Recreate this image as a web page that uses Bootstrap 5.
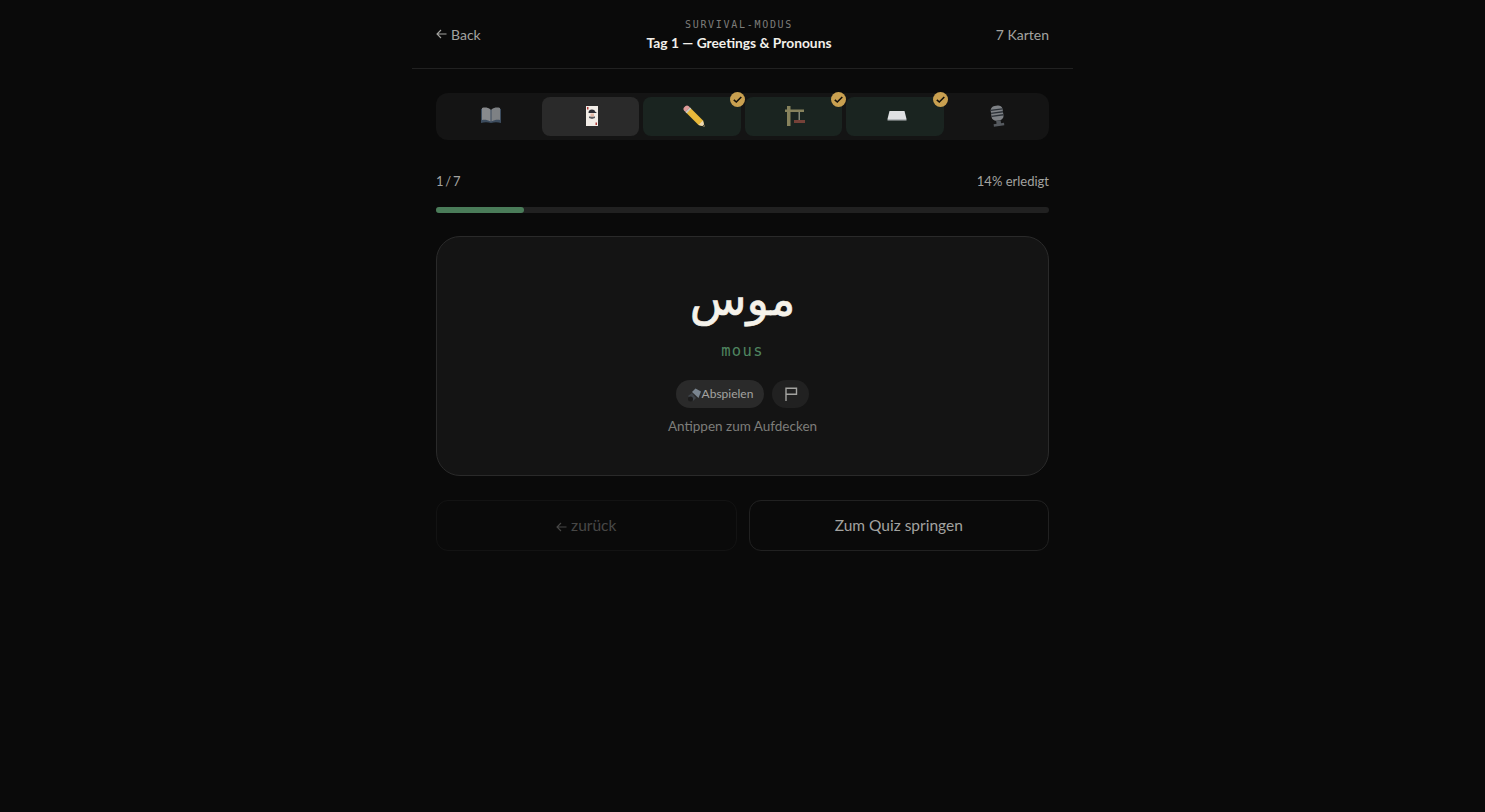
<!DOCTYPE html>
<html lang="de">
<head>
  <meta charset="UTF-8" />
  <meta name="viewport" content="width=device-width, initial-scale=1" />
  <title>Tag 1 — Greetings &amp; Pronouns</title>
  <link href="https://cdn.jsdelivr.net/npm/bootstrap@5.3.3/dist/css/bootstrap.min.css" rel="stylesheet" />
  <style>
    body { background: #0a0a0a; font-family: Lato, "Noto Sans", sans-serif; color: #a3a3a0; min-height: 812px; }
    .shell { width: 661px; margin: 0 auto; }
    .topbar { height: 69px; padding: 0 24px; border-bottom: 1px solid #212121; }
    .topbar-side { width: 110px; font-size: 14px; color: #a3a3a0; }
    .mode-label { font-family: "DejaVu Sans Mono", monospace; font-size: 10px; letter-spacing: 1.7px; color: #7d7d7a; line-height: 12px; margin-bottom: 3px; }
    .day-title { font-size: 13.8px; font-weight: 700; color: #f2f0ea; line-height: 17px; }
    .title-block { margin-left: -7px; padding-top: 2px; }
    .tabbar { height: 47px; margin-top: 24px; padding: 4px; gap: 4px; background: #141414; border-radius: 12px; }
    .tab-item { flex: 1 1 0; border-radius: 8px; position: relative; }
    .tab-item svg.emoji { width: 22px; height: 22px; margin: 0 0 1px 4px; }
    .tab-item.current { background: #2a2a2a; }
    .tab-item.done { background: #1a2420; }
    .tab-check { position: absolute; top: -5px; right: -4px; width: 15px; height: 15px; border-radius: 50%; background: #c9a050; }
    .tab-check svg { display: block; }
    .dim { opacity: .55; }
    .progress-text { margin-top: 32px; font-size: 13px; line-height: 18px; color: #a3a3a0; }
    .step-count { word-spacing: -1.5px; }
    .track { height: 6px; margin-top: 17px; background: #212121; border-radius: 3px; }
    .track-fill { height: 100%; background: #4a7c59; border-radius: 3px; }
    .flashcard { height: 240px; margin-top: 23px; background: #141414; border: 1px solid #2a2a2a; border-radius: 24px; padding-top: 32px; }
    .arabic { font-family: "DejaVu Sans", serif; font-size: 46.5px; line-height: 60px; color: #f5f2ea; font-weight: 400; -webkit-text-stroke: .7px #f5f2ea; }
    .translit { font-family: "DejaVu Sans Mono", monospace; font-size: 15.5px; line-height: 20px; letter-spacing: 1.3px; color: #4f8560; margin-top: 12px; }
    .play-row { margin-top: 19px; gap: 8px; }
    .pill-btn { height: 28px; padding: 0 11px; gap: 0; background: #2a2a2a; border: 0; border-radius: 14px; font-size: 12px; color: #a3a3a0; }
    .flag-btn { width: 37px; height: 28px; padding: 0; background: #212121; border: 0; border-radius: 14px; }
    .hint { margin-top: 10px; font-size: 13.5px; line-height: 17px; color: #7d7d7a; }
    .action-row { margin-top: 24px; gap: 12px; }
    .action-btn { flex: 1 1 0; height: 51px; background: transparent; border: 1px solid #212121; border-radius: 12px; font-size: 15.5px; color: #a3a3a0; }
    .action-btn:disabled { color: #a3a3a0; border-color: #212121; opacity: .4; }
  </style>
</head>
<body>
  <div class="shell">
    <header class="topbar d-flex align-items-center justify-content-between">
      <a class="topbar-side text-decoration-none d-flex align-items-center gap-1" href="#">
        <svg width="11" height="10" viewBox="0 0 11 10" fill="none" stroke="#a3a3a0" stroke-width="1.1"><path d="M10.5 5H1M5 1 1 5l4 4"/></svg>Back
      </a>
      <div class="title-block text-center">
        <div class="mode-label">SURVIVAL-MODUS</div>
        <div class="day-title">Tag 1 — Greetings &amp; Pronouns</div>
      </div>
      <div class="topbar-side text-end">7 Karten</div>
    </header>

    <main class="px-4">
      <nav class="tabbar d-flex">
        <div class="tab-item d-flex align-items-center justify-content-center">
          <svg class="emoji dim" viewBox="0 0 22 22"><path d="M1 4c3-1 7-1 10 1 3-2 7-2 10-1v14c-3-1-7-1-10 0-3-1-7-1-10 0z" fill="#5d7a9c"/><path d="M2 3c3-1 6-.5 8.500 1.500v12c-2.500-1.500-5.500-2-8.500-1.500z" fill="#e8ecf0"/><path d="M20 3c-3-1-6-.5-8.500 1.500v12c2.500-1.500 5.500-2 8.500-1.500z" fill="#d5dae0"/></svg>
        </div>
        <div class="tab-item current d-flex align-items-center justify-content-center">
          <svg class="emoji" viewBox="0 0 22 22"><rect x="5" y="1" width="12" height="20" fill="#f1ece6"/><path d="M7.500 8c0-2 1-3.500 3.500-3.500 2 0 3 1 3 2l1.500 1v.5z" fill="#2c2c34"/><path d="M8 11.500h6v1.500l-3 1-3-1z" fill="#5a5a60"/><path d="M9.500 8.500h3.500v3H9.500z" fill="#e3b8a6"/><path d="M6 2h1.500v2.500H6zM14.500 17.500H16V20h-1.500z" fill="#b03a3a"/></svg>
        </div>
        <div class="tab-item done d-flex align-items-center justify-content-center">
          <svg class="emoji" viewBox="0 0 22 22"><path d="M7 2.500l13 13 1.500 6-6-1.500L2.500 7z" fill="#e8b93a"/><path d="M2.500 7 7 2.500 5.500 1c-1-.8-2-.8-3 0L1 2.500c-.8 1-.8 2 0 3z" fill="#dd9a98"/><path d="M2.500 7 7 2.500l1.200 1.200-4.500 4.500z" fill="#c8c8c8"/><path d="M15.500 20l6 1.500-1.500-6z" fill="#ecd9b4"/><path d="M19.500 21l2 .5-.5-2z" fill="#3a3a3a"/></svg>
          <span class="tab-check"><svg width="15" height="15" viewBox="0 0 15 15" fill="none" stroke="#14100a" stroke-width="1.600"><path d="M3.800 7.800 6.300 10l5-5"/></svg></span>
        </div>
        <div class="tab-item done d-flex align-items-center justify-content-center">
          <svg class="emoji dim" viewBox="0 0 22 22"><path d="M3 1h3.500v20H3zM1 4.500h19v2.500H1z" fill="#e0cf8e"/><path d="M14.500 7h1.500v8h-1.500z" fill="#d8d8c0"/><path d="M10 15h11v3H10z" fill="#c05a4c"/></svg>
          <span class="tab-check"><svg width="15" height="15" viewBox="0 0 15 15" fill="none" stroke="#14100a" stroke-width="1.600"><path d="M3.800 7.800 6.300 10l5-5"/></svg></span>
        </div>
        <div class="tab-item done d-flex align-items-center justify-content-center">
          <svg class="emoji" viewBox="0 0 22 22"><path d="M3.500 6h15l2 8H1.500z" fill="#dfe1e3"/><path d="M1.500 14h19v1.500h-19z" fill="#b4b8bb"/></svg>
          <span class="tab-check"><svg width="15" height="15" viewBox="0 0 15 15" fill="none" stroke="#14100a" stroke-width="1.600"><path d="M3.800 7.800 6.300 10l5-5"/></svg></span>
        </div>
        <div class="tab-item d-flex align-items-center justify-content-center">
          <svg class="emoji dim" viewBox="0 0 22 22"><g transform="rotate(-8 11 11)"><rect x="4.500" y="0.500" width="12" height="15" rx="4.500" fill="#d5dbe2"/><path d="M4.500 4.500h12M4.500 7.500h12M4.500 10.500h12" stroke="#3f4853" stroke-width="1.300"/><path d="M8.500 15.500h4.500v3h3v2.500H5.500v-2.500h3z" fill="#8b939c"/></g></svg>
        </div>
      </nav>

      <div class="progress-text d-flex justify-content-between">
        <span class="step-count">1 / 7</span>
        <span>14% erledigt</span>
      </div>
      <div class="track"><div class="track-fill" style="width: 14.29%"></div></div>

      <section class="flashcard text-center">
        <div class="arabic" lang="ar" dir="rtl">موس</div>
        <div class="translit">mous</div>
        <div class="play-row d-flex justify-content-center">
          <button class="pill-btn d-flex align-items-center" type="button">
            <svg width="15" height="15" viewBox="0 0 15 15"><path d="M1 9l4-3 4 5-3 3z" fill="#3f444a"/><path d="M5 5l3.500-3.500 5.500 3-2.500 6.500z" fill="#7a8590"/><circle cx="3.500" cy="12" r="2.500" fill="#1c1c1c"/></svg>Abspielen
          </button>
          <button class="flag-btn d-flex align-items-center justify-content-center" type="button">
            <svg width="14" height="14" viewBox="0 0 14 14" fill="none" stroke="#a3a3a0" stroke-width="1.400"><path d="M2 14V1.200h10.500v6H2"/></svg>
          </button>
        </div>
        <div class="hint">Antippen zum Aufdecken</div>
      </section>

      <div class="action-row d-flex">
        <button class="action-btn" type="button" disabled>
          <svg width="11" height="10" viewBox="0 0 11 10" fill="none" stroke="#a3a3a0" stroke-width="1.100"><path d="M10.500 5H1M5 1 1 5l4 4"/></svg> zurück
        </button>
        <button class="action-btn" type="button">Zum Quiz springen</button>
      </div>
    </main>
  </div>
  <script src="https://cdn.jsdelivr.net/npm/bootstrap@5.3.3/dist/js/bootstrap.bundle.min.js"></script>
</body>
</html>
